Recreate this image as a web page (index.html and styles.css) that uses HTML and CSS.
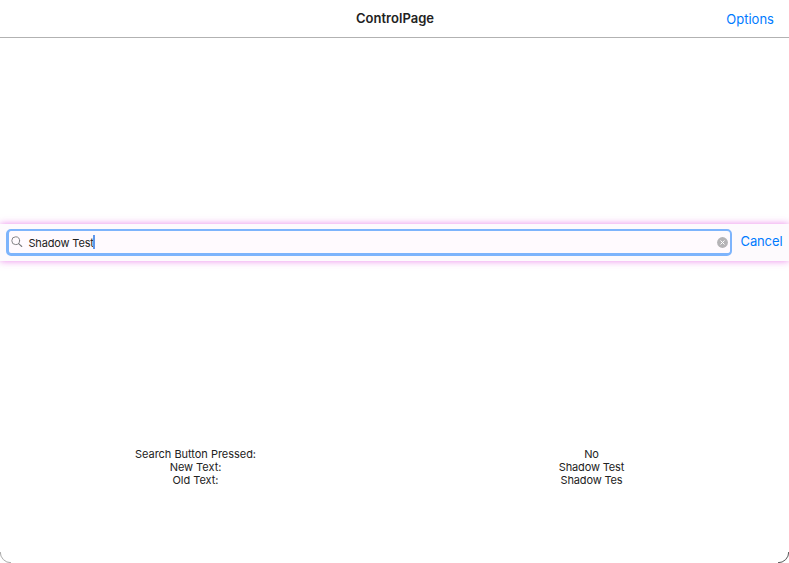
FILE: index.html
```html
<!DOCTYPE html>
<html lang="en">
<head>
<meta charset="utf-8">
<title>ControlPage</title>
<link rel="stylesheet" href="styles.css">
</head>
<body>
<div class="window">
  <header class="navbar">
    <span></span>
    <h1 class="title">ControlPage</h1>
    <a class="options">Options</a>
  </header>
  <main class="content">
    <div class="searchbar">
      <div class="field">
        <svg class="magnifier" width="12" height="12" viewBox="0 0 12 12" fill="none" stroke="#77777b" stroke-linecap="round"><circle cx="4.7" cy="4.7" r="3.9" stroke-width="0.9"/><path d="M7.6 7.6 10.8 10.5" stroke-width="1.1"/></svg>
        <span class="query">Shadow Test</span><span class="caret"></span>
        <svg class="clear" width="11" height="11" viewBox="0 0 11 11"><circle cx="5.5" cy="5.5" r="5.4" fill="#b5b3b6"/><path d="M3.8 3.8 7.2 7.2M7.2 3.8 3.8 7.2" stroke="#fff" stroke-width="1" stroke-linecap="round"/></svg>
      </div>
      <a class="cancel">Cancel</a>
    </div>
    <div class="results">
      <p>Search Button Pressed:<br>New Text:<br>Old Text:</p>
      <p class="values">No<br>Shadow Test<br>Shadow Tes</p>
    </div>
  </main>
  <svg class="corner left" width="11" height="11" viewBox="0 0 11 11" fill="none" stroke="#aaa"><path d="M.3 0A10.5 10.5 0 0 0 11 10.7"/></svg>
  <svg class="corner right" width="11" height="11" viewBox="0 0 11 11" fill="none" stroke="#555"><path d="M10.7 0A10.5 10.5 0 0 1 0 10.7"/></svg>
</div>
</body>
</html>
```

FILE: styles.css
```css
* { box-sizing: border-box; }
body {
  margin: 0;
  background: #fff;
  font-family: Inter, "Liberation Sans", sans-serif;
  color: #222;
  overflow: hidden;
}
.window {
  position: relative;
  height: 563px;
  background: #fff;
  overflow: hidden;
  display: flex;
  flex-direction: column;
}
.corner { position: absolute; bottom: 0; }
.left { left: 0; }
.right { right: 0; }
.navbar {
  height: 38px;
  flex: none;
  border-bottom: 1px solid #b2b2b2;
  display: grid;
  grid-template-columns: 1fr auto 1fr;
  align-items: center;
  padding: 0 15px 0 16px;
}
.title {
  margin: 0;
  font-size: 13px;
  font-weight: 600;
  letter-spacing: 0.04px;
  line-height: 16px;
  padding-bottom: 2px;
}
.options, .cancel {
  color: #007aff;
  font-size: 13px;
  line-height: 16px;
}
.options { justify-self: end; letter-spacing: 0.02px; padding-top: 1px; }
.content {
  flex: 1;
  padding-top: 186px;
}
.searchbar {
  height: 37px;
  display: flex;
  align-items: center;
  padding: 0 6px;
  background: #fdfafd;
  box-shadow: 0 0 7px rgba(225, 70, 225, 0.65);
}
.field {
  width: 726px;
  flex: none;
  height: 27px;
  border: solid #7db4fc;
  border-width: 2px 2px 3px 3px;
  border-radius: 5px;
  background: #fffafe;
  display: flex;
  align-items: center;
  padding: 0 2px 0 2px;
}
.magnifier { flex: none; margin: 0 5px 1px 0; }
.query {
  font-size: 11px;
  letter-spacing: -0.15px;
  line-height: 15px;
  padding-top: 2px;
  margin-left: 0.4px;
}
.caret { width: 2px; height: 14px; margin-left: -1px; background: #5f97ec; }
.clear { margin-left: auto; }
.cancel { margin-left: 8.5px; letter-spacing: -0.12px; padding-bottom: 3px; }
.results {
  margin-top: 187px;
  display: grid;
  grid-template-columns: 391px 401px;
}
.results p {
  margin: 0;
  text-align: center;
  font-size: 11px;
  line-height: 13px;
  letter-spacing: -0.03px;
}
.results .values { letter-spacing: -0.15px; }
```
